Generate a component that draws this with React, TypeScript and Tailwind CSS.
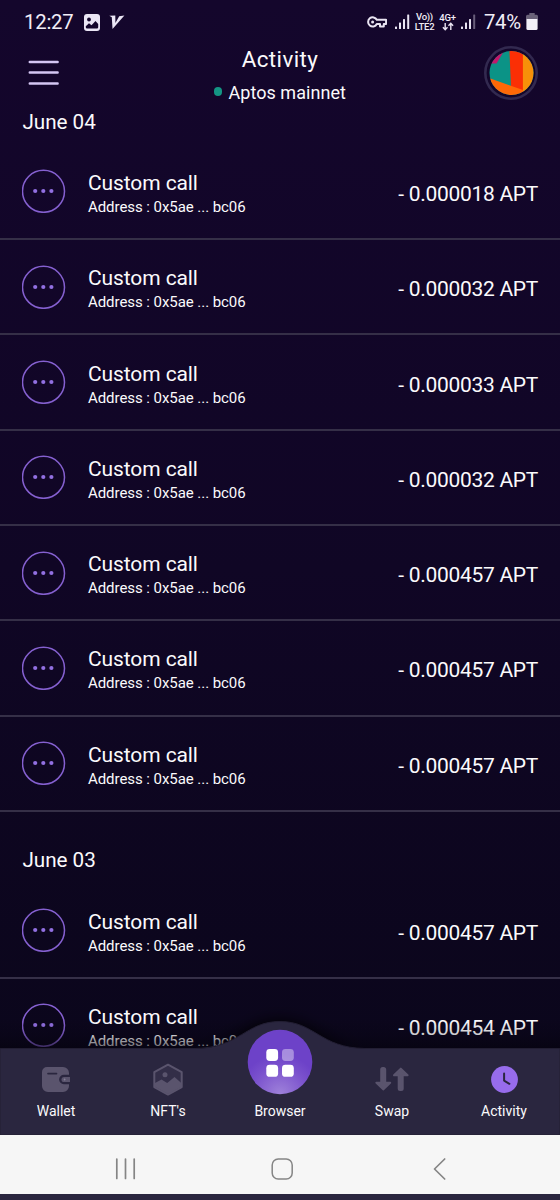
import type { ReactNode } from "react";

type Transaction = {
  title: string;
  address: string;
  amount: string;
};

type Section = {
  date: string;
  items: Transaction[];
};

const call = (amount: string): Transaction => ({
  title: "Custom call",
  address: "0x5ae ... bc06",
  amount,
});

const sections: Section[] = [
  {
    date: "June 04",
    items: [
      call("0.000018"),
      call("0.000032"),
      call("0.000033"),
      call("0.000032"),
      call("0.000457"),
      call("0.000457"),
      call("0.000457"),
    ],
  },
  {
    date: "June 03",
    items: [call("0.000457"), call("0.000454")],
  },
];

function SignalIcon({ weak = false }: { weak?: boolean }) {
  return (
    <svg width="15" height="16" viewBox="0 0 15 16" fill="#e9e4f2">
      <rect x="0" y="12.5" width="2" height="2.5" rx="0.5" />
      <rect x="4" y="8.5" width="2" height="6.5" rx="0.5" />
      <rect x="8" y="5" width="2" height="10" rx="0.5" />
      <rect x="12.2" y="0.5" width="2" height="14.5" rx="0.5" opacity={weak ? 0.4 : 1} />
    </svg>
  );
}

function StatusBar() {
  return (
    <div className="flex h-11 shrink-0 items-center pl-6 pr-[22px] text-[#f1edf7]">
      <span className="w-[50px] whitespace-nowrap text-[20.3px] leading-none tracking-[-0.2px]">12:27</span>
      <svg className="ml-2.5" width="16" height="17" viewBox="0 0 16 17">
        <rect x="0" y="0" width="16" height="17" rx="3" fill="#ebe6f5" />
        <circle cx="5" cy="5.5" r="1.9" fill="#14062c" />
        <path d="M1.8 12.2 5 9.2l2.5 2.1 4-4.4 2.7 3v3.3a1.3 1.3 0 0 1-1.3 1.3H3.1a1.3 1.3 0 0 1-1.3-1.3z" fill="#14062c" />
      </svg>
      <svg className="ml-[9px]" width="16" height="15" viewBox="0 0 16 15" fill="#ebe6f5">
        <path d="M.3.8 6.3.6 6.4 8 10.2 1.3 15.4.5 3.5 14 2.8 2.2z" />
      </svg>
      <div className="ml-auto flex items-center">
        <svg width="20" height="12" viewBox="0 0 20 12" fill="none" stroke="#e9e4f2" strokeWidth="2">
          <path d="M9.8 3.8A4.6 4.6 0 1 0 9.8 8H13v2.6h3.8V8h2.3V3.8z" strokeLinejoin="round" />
          <circle cx="5.6" cy="5.9" r="1.5" fill="#e9e4f2" stroke="none" />
        </svg>
        <div className="ml-2">
          <SignalIcon />
        </div>
        <div className="ml-[3px] flex w-[23px] flex-col items-center whitespace-nowrap text-[9.5px] font-medium leading-[9.5px]">
          <span className="tracking-[-0.3px]">Vo))</span>
          <span className="tracking-[-0.2px]">LTE2</span>
        </div>
        <div className="ml-[3px] flex w-[17px] flex-col items-center">
          <span className="text-[9.5px] font-medium leading-[9px] tracking-[-0.2px]">4G+</span>
          <svg width="12" height="9" viewBox="0 0 12 9" fill="none" stroke="#e9e4f2" strokeWidth="1.4">
            <path d="M3.2 1v6.6M.9 5.3l2.3 2.4 2.3-2.4M8.8 8V1.4M6.5 3.7l2.3-2.4 2.3 2.4" />
          </svg>
        </div>
        <div className="ml-[5px]">
          <SignalIcon weak />
        </div>
        <span className="ml-2 w-[39px] whitespace-nowrap text-[20.3px] leading-none tracking-[-0.3px]">74%</span>
        <svg className="ml-[3px]" width="12" height="17" viewBox="0 0 12 17">
          <path d="M3.3 0h5.4v1.8h1.6A1.6 1.6 0 0 1 12 3.4V6H0V3.4a1.6 1.6 0 0 1 1.6-1.6h1.7z" fill="#6a6279" />
          <path d="M.4 6h11.2v9.4a1.5 1.5 0 0 1-1.5 1.5H1.9a1.5 1.5 0 0 1-1.5-1.5z" fill="#f3f0f8" />
        </svg>
      </div>
    </div>
  );
}

function Avatar() {
  return (
    <svg width="54" height="54" viewBox="0 0 54 54">
      <defs>
        <clipPath id="avatar">
          <circle cx="27.5" cy="27" r="22" />
        </clipPath>
      </defs>
      <circle cx="27" cy="27" r="25.7" fill="none" stroke="#32294f" strokeWidth="2.6" />
      <g clipPath="url(#avatar)">
        <rect width="54" height="54" fill="#0b9386" />
        <path d="M0 0h23L12.5 17.5H0z" fill="#c2186b" />
        <path d="M25.2 0H39v46l-12-5z" fill="#fb2f05" />
        <path d="M38.9 0H54v54H38.9z" fill="#f79009" />
        <path d="M0 30.3 39 44v10H0z" fill="#ff6807" />
      </g>
    </svg>
  );
}

function Header() {
  return (
    <header className="flex h-[60px] shrink-0 items-start justify-between pl-[28px] pr-[22px]">
      <svg className="mt-4" width="48" height="28" viewBox="0 0 48 28" stroke="#d4c6f3" strokeWidth="2.5" strokeLinecap="round">
        <path d="M1.8 1.9H29.6M1.8 12.6H29.6M1.8 23.6H29.6" />
      </svg>
      <div className="flex flex-col items-center pt-[2px]">
        <h1 className="text-[22.4px] leading-[26px] tracking-[0.4px]">Activity</h1>
        <p className="mt-[10px] flex items-center gap-1.5 text-[18px] leading-[22px] tracking-[0.05px]">
          <span className="mb-[3px] size-[8.5px] rounded-full bg-[#149584]" />
          Aptos mainnet
        </p>
      </div>
      <div className="mt-[2px]">
        <Avatar />
      </div>
    </header>
  );
}

function CallIcon() {
  return (
    <svg width="44" height="44" viewBox="0 0 44 44" fill="#9270e2">
      <circle cx="21.5" cy="22.3" r="21" fill="none" stroke="#8560d0" strokeWidth="1.5" />
      <circle cx="13.2" cy="22" r="2.1" />
      <circle cx="21.3" cy="22" r="2.1" />
      <circle cx="29.4" cy="22" r="2.1" />
    </svg>
  );
}

function TransactionRow({ item }: { item: Transaction }) {
  return (
    <li className="flex h-[95.33px] items-center border-b-2 border-[#352f47] pl-[22px] pr-[22px]">
      <CallIcon />
      <div className="ml-[22px] flex-1 pt-[6px]">
        <p className="text-[21px] leading-[25px] tracking-[-0.1px]">{item.title}</p>
        <p className="text-[15px] leading-[22px] tracking-[-0.06px]">Address : {item.address}</p>
      </div>
      <p className="pt-[6px] text-[21px] leading-[25px] tracking-[-0.29px]">- {item.amount} APT</p>
    </li>
  );
}

function Tab({ label, children }: { label: string; children?: ReactNode }) {
  return (
    <button className="flex flex-1 flex-col items-center pt-[43px]">
      <span className="flex h-8 items-center justify-center">{children}</span>
      <span className="mt-2 text-[14px] leading-4">{label}</span>
    </button>
  );
}

function TabBar() {
  return (
    <nav className="relative -mt-[28px] flex h-[115px] shrink-0">
      <svg className="absolute inset-x-0 bottom-0" width="560" height="150" viewBox="0 -35 560 150">
        <defs>
          <linearGradient id="fade" x1="0" y1="0" x2="0" y2="1">
            <stop offset="0" stopColor="#05030d" stopOpacity="0" />
            <stop offset="0.5" stopColor="#05030d" stopOpacity="0.2" />
            <stop offset="1" stopColor="#05030d" stopOpacity="0.65" />
          </linearGradient>
          <radialGradient id="browser" cx="0.5" cy="1" r="0.62">
            <stop offset="0" stopColor="#9f82da" />
            <stop offset="0.7" stopColor="#7a51cd" />
            <stop offset="1" stopColor="#6d42c8" />
          </radialGradient>
          <filter id="shadow" x="-30%" y="-60%" width="160%" height="200%">
            <feGaussianBlur stdDeviation="8" />
          </filter>
        </defs>
        <rect x="0" y="0" width="560" height="30" fill="url(#fade)" />
        <path d="M195 28C240 28 245 1.5 280 1.5S320 28 365 28z" fill="#05030d" filter="url(#shadow)" />
        <path d="M0 28.5H195C240 28 245 1.5 280 1.5S320 28 365 28.5H560V115H0z" fill="#2a263f" stroke="#221e33" />
        <circle cx="280" cy="42" r="32.3" fill="url(#browser)" />
        <g fill="#fff">
          <rect x="266.3" y="29" width="11.8" height="12" rx="3.4" />
          <rect x="282" y="29" width="11.8" height="12" rx="3.4" opacity="0.4" />
          <rect x="266.3" y="44.8" width="11.8" height="12" rx="3.4" />
          <rect x="282" y="44.8" width="11.8" height="12" rx="3.4" />
        </g>
      </svg>
      <div className="relative flex flex-1">
        <Tab label="Wallet">
          <svg width="28" height="25" viewBox="0 0 28 25">
            <path d="M5 0h16a6 6 0 0 1 6 6v1.8h-5.2a4.7 4.7 0 0 0 0 9.4H27V19a6 6 0 0 1-6 6H6a6 6 0 0 1-6-6V5a5 5 0 0 1 5-5z" fill="#5a546d" />
            <path d="M6 6.6h8.5" stroke="#2a263f" strokeWidth="1.7" strokeLinecap="round" />
            <path d="M28 9.9h-5.9a2.6 2.6 0 0 0 0 5.2H28z" fill="#5a546d" />
            <circle cx="22.6" cy="12.5" r="0.9" fill="#857f97" />
          </svg>
        </Tab>
        <Tab label="NFT's">
          <svg width="32" height="33" viewBox="0 0 32 33">
            <path d="M16 1.7 29.7 9.2v14.9L16 31.6 2.3 24.1V9.2z" fill="#332e48" stroke="#5a546d" strokeWidth="2" strokeLinejoin="round" />
            <path d="m3 20 6.5-3.6 5.7 3.5 7.3-5.8 6.5 5.6v4.4L16 31 3 23.8z" fill="#5a546d" />
            <circle cx="13" cy="11.8" r="2.5" fill="#5a546d" />
          </svg>
        </Tab>
        <Tab label="Browser" />
        <Tab label="Swap">
          <svg width="34" height="24" viewBox="0 0 34 24" fill="#5a546d" stroke="#5a546d" strokeWidth="2" strokeLinejoin="round">
            <path d="M6.2 2.5A1.5 1.5 0 0 1 7.7 1h1a1.5 1.5 0 0 1 1.5 1.5V15.8h5L8.2 22.4 1.4 15.8h4.8z" />
            <path d="M23.7 21.5a1.5 1.5 0 0 0 1.5 1.5h1a1.5 1.5 0 0 0 1.5-1.5V8.2h4.9L25.8 1.6l-6.8 6.6h4.7z" />
          </svg>
        </Tab>
        <Tab label="Activity">
          <svg width="27" height="27" viewBox="0 0 27 27">
            <circle cx="13.5" cy="13.5" r="13.4" fill="#976cec" />
            <path d="M13.1 7.5v7.1l5.3 3.2" fill="none" stroke="#2a263f" strokeWidth="2" strokeLinecap="round" strokeLinejoin="round" />
          </svg>
        </Tab>
      </div>
    </nav>
  );
}

function SystemNav() {
  return (
    <div className="flex h-[59px] shrink-0 items-center bg-[#f6f6f6] pt-2">
      <svg width="560" height="26" viewBox="0 0 560 26" fill="none" stroke="#858585" strokeWidth="1.7" strokeLinecap="round" strokeLinejoin="round">
        <path d="M116.8 3v19.5M125.5 3v19.5M134.2 3v19.5" />
        <rect x="272.2" y="3" width="20" height="20" rx="6" strokeWidth="1.5" />
        <path d="m444.7 3-10.2 10 10.2 10" />
      </svg>
    </div>
  );
}

export default function App() {
  return (
    <div className="flex h-[1200px] w-[560px] flex-col overflow-hidden bg-[#2a263f] font-['Roboto',sans-serif] text-[#fbfafc]">
      <div className="flex min-h-0 flex-1 flex-col bg-linear-to-b from-[#14062c] via-[#100625] to-[#0a061a]">
        <StatusBar />
        <Header />
        <main className="min-h-0 flex-1 overflow-hidden">
          {sections.map((section, index) => (
            <section key={section.date}>
              <h2
                className={`pl-[22.5px] text-[20.7px] leading-6 tracking-[-0.05px] ${index === 0 ? "pt-[5.7px] pb-[11px]" : "pt-[36.4px] pb-[11px]"}`}
              >
                {section.date}
              </h2>
              <ul>
                {section.items.map((item, i) => (
                  <TransactionRow key={i} item={item} />
                ))}
              </ul>
            </section>
          ))}
        </main>
        <TabBar />
      </div>
      <SystemNav />
      <div className="h-1.5 shrink-0 bg-[#2a263f]" />
    </div>
  );
}
